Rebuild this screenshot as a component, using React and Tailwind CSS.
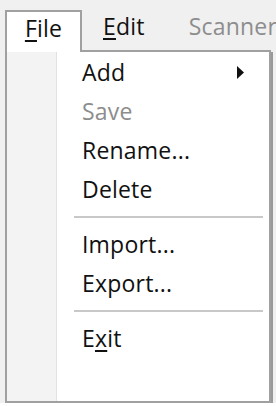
import React from "react";

const font = { fontFamily: '"Open Sans", "Noto Sans", sans-serif' };

function Item({ children, disabled, arrow }) {
  return (
    <div className="flex h-[39px] items-center pl-[76px] pr-[26px]">
      <span className={`flex-1 text-[23px] font-medium leading-none tracking-[0.2px] ${disabled ? "text-[#8d8d8d]" : "text-[#111111]"}`}>
        {children}
      </span>
      {arrow && (
        <svg width="7" height="13" viewBox="0 0 7 13" className="mr-[-1px]">
          <polygon points="0,0 7,6.5 0,13" fill="#111" />
        </svg>
      )}
    </div>
  );
}

function Sep() {
  return (
    <div className="flex h-[16px] items-center pl-[68px] pr-[6px]">
      <div className="h-[2px] w-full bg-[#c8c8c8]" />
    </div>
  );
}

export default function App() {
  return (
    <div className="flex h-[406px] w-[276px] flex-col overflow-hidden bg-[#f0f0f0]" style={font}>
      <div className="flex h-[50px] items-end pl-[5px]">
        <div className="relative z-10 -mb-[2px] flex h-[42px] w-[77px] shrink-0 items-start justify-center border-l-2 border-r-2 border-t-2 border-[#a0a0a0] bg-white pt-[5px]">
          <span className="text-[23px] font-medium leading-none tracking-[0.2px] text-[#111111]">
            <span className="underline decoration-[2px] underline-offset-[3px]">F</span>ile
          </span>
        </div>
        <div className="flex h-[42px] shrink-0 items-start whitespace-nowrap pl-[21px] pt-[7px]">
          <span className="text-[23px] font-medium leading-none tracking-[0.2px] text-[#111111]">
            <span className="underline decoration-[2px] underline-offset-[3px]">E</span>dit
          </span>
          <span className="ml-[44px] text-[23px] font-medium leading-none tracking-[0.2px] text-[#8d8d8d]">Scanner</span>
        </div>
      </div>
      <div className="ml-[5px] w-[266px] shrink-0 shadow-[2px_2px_0_#9a9a9a]">
        <div className="flex h-[353px] flex-col border-2 border-[#a0a0a0] bg-white">
          <div className="flex flex-1">
            <div className="w-[50px] shrink-0 border-r border-[#e2e2e2] bg-[#f3f3f3]" />
            <div className="-ml-[51px] flex flex-1 flex-col pt-[1px]">
              <Item arrow>Add</Item>
              <Item disabled>Save</Item>
              <Item>Rename...</Item>
              <Item>Delete</Item>
              <Sep />
              <Item>Import...</Item>
              <Item>Export...</Item>
              <Sep />
              <Item>
                E<span className="underline decoration-[2px] underline-offset-[3px]">x</span>it
              </Item>
            </div>
          </div>
        </div>
      </div>
      <div className="flex-1 bg-white" />
    </div>
  );
}
